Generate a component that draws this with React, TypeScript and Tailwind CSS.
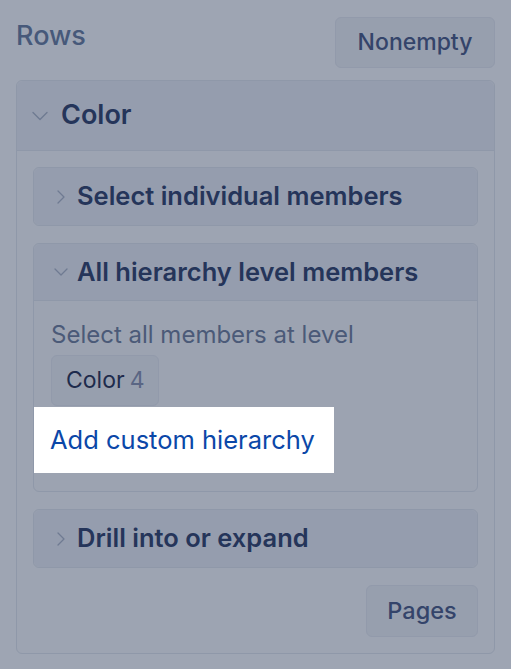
import { ChevronDown, ChevronRight } from "lucide-react";

const font = { fontFamily: "Inter, 'Noto Sans', sans-serif" };

function Section({
  title,
  open,
  children,
}: {
  title: string;
  open?: boolean;
  children?: React.ReactNode;
}) {
  return (
    <div className="rounded-md border border-[#8f98a9] bg-[#9ca3b1]">
      <div
        className={`flex h-[57px] items-center gap-[4px] bg-[#959dae] pl-[15px] ${
          open ? "rounded-t-md border-b border-[#8f98a9]" : "rounded-md"
        }`}
      >
        {open ? (
          <ChevronDown className="h-[24px] w-[24px] text-[#6f7b92]" strokeWidth={1.3} />
        ) : (
          <ChevronRight className="h-[24px] w-[24px] text-[#6f7b92]" strokeWidth={1.3} />
        )}
        <span className="text-[25.5px] font-semibold text-[#25355a]">{title}</span>
      </div>
      {open && children}
    </div>
  );
}

export default function App() {
  return (
    <div className="h-[669px] w-[511px] bg-[#9ea5b3]" style={font}>
      <div className="px-[16px] pt-[17px]">
        <div className="flex items-start justify-between">
          <span className="mt-[-1px] text-[27px] font-medium text-[#47597a]">Rows</span>
          <button className="flex h-[51px] w-[160px] items-center justify-center rounded-md border border-[#929aab] bg-[#979fae] text-[23px] font-medium text-[#34446a]">
            Nonempty
          </button>
        </div>

        <div className="mt-[12px] rounded-md border border-[#8f98a9] bg-[#9da4b2]">
          <div className="flex h-[70px] items-center gap-[7px] rounded-t-md border-b border-[#8f98a9] bg-[#959dae] pl-[9px]">
            <ChevronDown className="h-[28px] w-[28px] text-[#6f7b92]" strokeWidth={1.2} />
            <span className="text-[27px] font-semibold text-[#25355a]">Color</span>
          </div>
          <div className="flex flex-col gap-[17px] px-[16px] pb-[16px] pt-[16px]">
            <Section title="Select individual members" />
            <Section title="All hierarchy level members" open>
              <div className="pb-[18px]">
                <div className="px-[17px] pt-[18px] text-[24px] leading-[32px] text-[#4b5a78]">
                  Select all members at level
                </div>
                <div className="px-[17px] pt-[4px]">
                  <span className="inline-flex h-[51px] items-center gap-[5px] rounded-md border border-[#929aab] bg-[#979fae] px-[14px] text-[23px]">
                    <span className="text-[#1e2b4c]">Color</span>
                    <span className="text-[#5a6684]">4</span>
                  </span>
                </div>
                <div className="mt-[1px] flex h-[66px] w-[300px] items-center bg-white pl-[16px] text-[25.5px] text-[#0b47a8]">
                  Add custom hierarchy
                </div>
              </div>
            </Section>
            <Section title="Drill into or expand" />
            <div className="flex justify-end">
              <button className="flex h-[52px] w-[112px] items-center justify-center rounded-md border border-[#929aab] bg-[#979fae] text-[23.5px] font-medium text-[#34446a]">
                Pages
              </button>
            </div>
          </div>
        </div>
      </div>
    </div>
  );
}
